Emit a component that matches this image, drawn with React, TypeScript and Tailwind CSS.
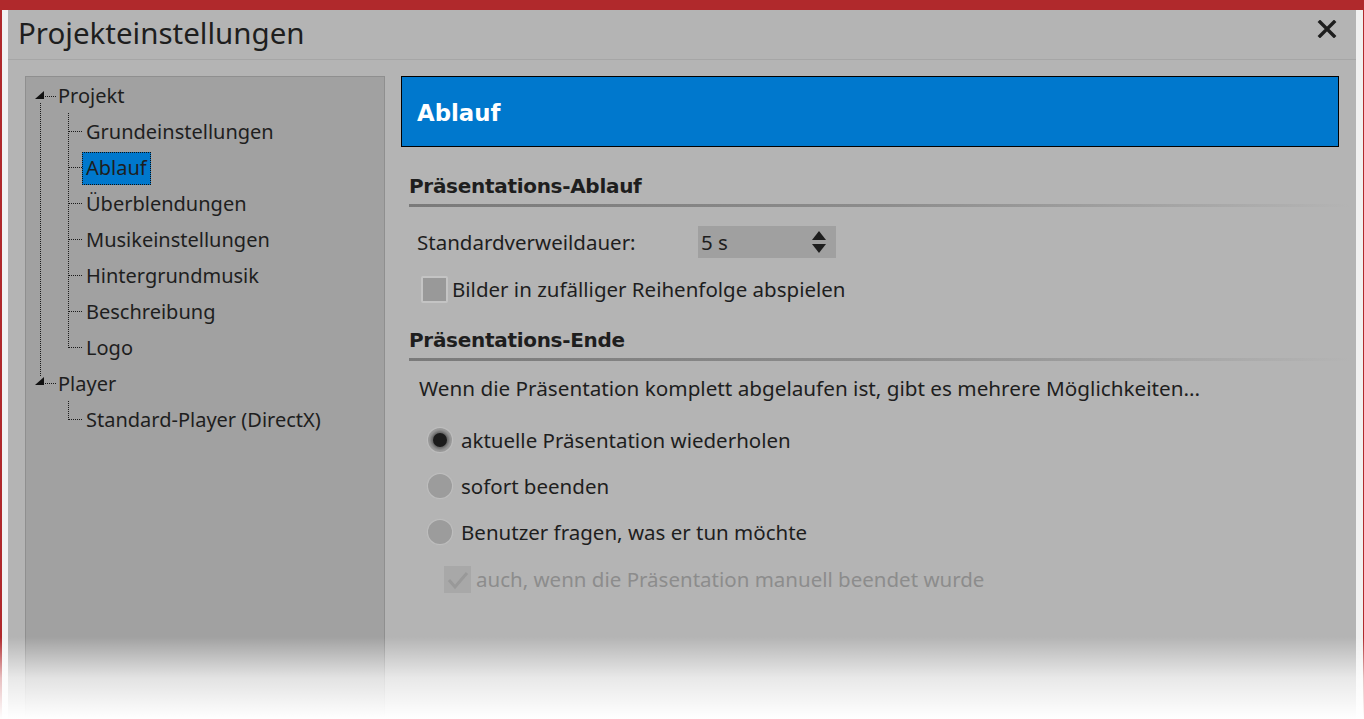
import React from 'react';

const font = { fontFamily: '"Noto Sans", "Open Sans", sans-serif' };

const children = [
  'Grundeinstellungen',
  'Ablauf',
  'Überblendungen',
  'Musikeinstellungen',
  'Hintergrundmusik',
  'Beschreibung',
  'Logo',
];

function TreeLines() {
  // dotted connector lines + expander triangles, coordinates relative to the panel's padding box
  const dot = { stroke: '#1a1a1a', strokeWidth: 1, strokeDasharray: '1 1' };
  return (
    <svg className="absolute inset-0 pointer-events-none" width="358" height="400">
      <polygon points="18,14 18,22 9,22" fill="#111" />
      <line x1="19" y1="19.5" x2="30" y2="19.5" {...dot} />
      <line x1="14.5" y1="26" x2="14.5" y2="300" {...dot} />
      <polygon points="18,300 18,308 9,308" fill="#111" />
      <line x1="19" y1="306.5" x2="30" y2="306.5" {...dot} />
      <line x1="42.5" y1="36" x2="42.5" y2="271" {...dot} />
      {children.map((c, i) => (
        <line key={c} x1="43" y1={54.5 + i * 36} x2="57" y2={54.5 + i * 36} {...dot} />
      ))}
      <line x1="42.5" y1="324" x2="42.5" y2="343" {...dot} />
      <line x1="43" y1="342.5" x2="57" y2="342.5" {...dot} />
    </svg>
  );
}

function SectionHeading({ title }: { title: string }) {
  return (
    <div className="ml-[8px]">
      <div className="h-[34px] flex items-center text-[20px] font-bold text-[#1e1e1e]" style={{ fontFamily: '"DejaVu Sans", sans-serif', letterSpacing: '-0.3px' }}>
        {title}
      </div>
      <div className="h-[3px] mt-[1px] bg-gradient-to-r from-[#7a7a7a] via-[#8c8c8c] to-[#b4b4b4]" />
    </div>
  );
}

function Radio({ checked, label }: { checked?: boolean; label: string }) {
  return (
    <div className="flex items-center h-[46px] pl-[27px]">
      <div className="w-[24px] h-[24px] rounded-full bg-[#9c9c9c] flex items-center justify-center shadow-[0_0_1px_1px_rgba(200,200,200,0.6)]">
        {checked && <div className="w-[14px] h-[14px] rounded-full bg-[#1c1c1c] shadow-[0_0_3px_2px_rgba(40,40,40,0.5)]" />}
      </div>
      <span className="ml-[9px] text-[20.5px] text-[#1e1e1e]">{label}</span>
    </div>
  );
}

export default function App() {
  return (
    <div className="relative w-[1364px] h-[719px] overflow-hidden bg-white" style={font}>
      <div className="h-[10px] bg-[#b0292c]" />
      <div className="flex h-[709px]">
        <div className="w-[2px] bg-[#b0292c]" />
        <div className="w-[6px] bg-[#f2f2f2]" />
        <div className="flex-1 min-h-0 bg-[#b4b4b4] flex flex-col overflow-hidden">
          {/* title bar */}
          <div className="shrink-0 h-[50px] flex items-center justify-between pl-[10px] pr-[19px] border-b border-[#a6a6a6]">
            <span className="text-[29.5px] text-[#1e1e1e] leading-none mb-[3px]">Projekteinstellungen</span>
            <svg width="20" height="18" viewBox="0 0 20 18" className="mb-[11px]">
              <path d="M3 2 L17 16 M17 2 L3 16" stroke="#1e1e1e" strokeWidth="3.4" strokeLinecap="square" />
            </svg>
          </div>
          <div className="flex flex-1 min-h-0 pt-[16px] pl-[17px]">
            {/* tree */}
            <div className="relative w-[360px] shrink-0 border border-[#8f8f8f] bg-[#a1a1a1] pt-[1px]">
              <TreeLines />
              <div className="h-[36px] flex items-center pl-[32px] text-[20px] text-[#1e1e1e]">Projekt</div>
              {children.map((c) => (
                <div key={c} className="h-[36px] flex items-center pl-[56px] text-[20px] text-[#1e1e1e]">
                  <span
                    className={
                      c === 'Ablauf'
                        ? 'h-[33px] flex items-center px-[3px] bg-[#0078cd] border border-dotted border-[#111]'
                        : 'h-[33px] flex items-center px-[3px] border border-transparent'
                    }
                  >
                    {c}
                  </span>
                </div>
              ))}
              <div className="h-[36px] flex items-center pl-[32px] text-[20px] text-[#1e1e1e]">Player</div>
              <div className="h-[36px] flex items-center pl-[60px] text-[20px] text-[#1e1e1e]">Standard-Player (DirectX)</div>
            </div>

            {/* content */}
            <div className="flex-1 pl-[16px] pr-[5px]">
              <div className="mr-[12px] h-[71px] bg-[#0078cd] border border-black flex items-center pl-[15px]">
                <span className="text-white text-[22.8px] font-bold mt-[3px]" style={{ fontFamily: '"DejaVu Sans", sans-serif' }}>
                  Ablauf
                </span>
              </div>

              <div className="mt-[22px]">
                <SectionHeading title="Präsentations-Ablauf" />
              </div>

              <div className="flex items-center h-[32px] mt-[19px] pl-[16px] text-[20.5px] text-[#1e1e1e]">
                <span className="w-[281px]">Standardverweildauer:</span>
                <div className="w-[138px] h-[32px] bg-[#a0a0a0] flex items-center justify-between pl-[3px] pr-[9px]">
                  <span>5 s</span>
                  <svg width="16" height="24" viewBox="0 0 16 24">
                    <polygon points="8,1 15,10 1,10" fill="#1e1e1e" />
                    <polygon points="1,14 15,14 8,23" fill="#1e1e1e" />
                  </svg>
                </div>
              </div>

              <div className="flex items-center h-[27px] mt-[18px] pl-[20px]">
                <div className="w-[27px] h-[27px] bg-[#999999] border-[2px] border-[#c4c4c4] rounded-[2px]" />
                <span className="ml-[4px] text-[20.5px] text-[#1e1e1e]">Bilder in zufälliger Reihenfolge abspielen</span>
              </div>

              <div className="mt-[20px]">
                <SectionHeading title="Präsentations-Ende" />
              </div>

              <div className="h-[30px] flex items-center mt-[13px] pl-[18px] text-[20.7px] text-[#1e1e1e]">
                Wenn die Präsentation komplett abgelaufen ist, gibt es mehrere Möglichkeiten...
              </div>

              <div className="mt-[13px]">
                <Radio checked label="aktuelle Präsentation wiederholen" />
                <Radio label="sofort beenden" />
                <Radio label="Benutzer fragen, was er tun möchte" />
              </div>

              <div className="flex items-center h-[27px] mt-[11px] pl-[43px]">
                <div className="w-[27px] h-[27px] bg-[#a8a8a8] flex items-center justify-center">
                  <svg width="22" height="20" viewBox="0 0 22 20">
                    <path d="M2 10 L8 17 L20 3" stroke="#999999" strokeWidth="3" fill="none" />
                  </svg>
                </div>
                <span className="ml-[5px] text-[20.5px] text-[#8c8c8c]">auch, wenn die Präsentation manuell beendet wurde</span>
              </div>
            </div>
          </div>
        </div>
        <div className="w-[7px] bg-[#f0f0f0]" />
        <div className="w-[1px] bg-[#b0292c]" />
      </div>

      {/* bottom fade over everything */}
      <div className="absolute left-0 right-0 bottom-0 h-[82px] pointer-events-none bg-gradient-to-b from-transparent via-white/70 to-white" />
    </div>
  );
}
